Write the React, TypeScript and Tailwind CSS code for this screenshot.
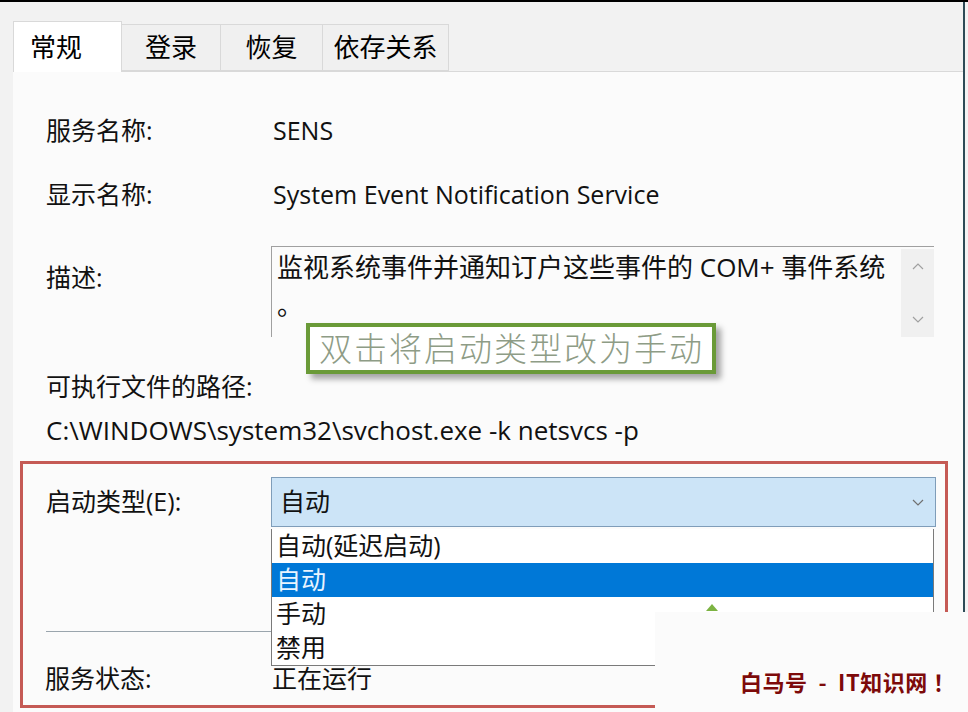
const ui = "font-['Open_Sans','Noto_Sans_CJK_SC',sans-serif]";

function Chevron({ up = false, className = "" }: { up?: boolean; className?: string }) {
  return (
    <svg width="12" height="7" viewBox="0 0 12 7" className={className}>
      <path
        d={up ? "M1 6 L6 1 L11 6" : "M1 1 L6 6 L11 1"}
        fill="none"
        stroke="currentColor"
        strokeWidth="1.2"
      />
    </svg>
  );
}

function Tab({ label, active, width }: { label: string; active?: boolean; width: string }) {
  return (
    <div
      className={`${width} flex items-center border border-[#d9d9d9] ${
        active
          ? "h-[51px] bg-white border-b-0 pl-[16px] -mb-px relative z-10"
          : "h-[47px] bg-[#f0f0f0] border-l-0 justify-center"
      }`}
    >
      <span className="text-[26px] text-black">{label}</span>
    </div>
  );
}

function Row({ label, children, className = "" }: { label: string; children?: React.ReactNode; className?: string }) {
  return (
    <div className={`flex items-center h-[40px] ${className}`}>
      <div className="w-[227px] shrink-0 text-[25px]">{label}</div>
      <div className="text-[25px] whitespace-nowrap">{children}</div>
    </div>
  );
}

export default function App() {
  const options = ["自动(延迟启动)", "自动", "手动", "禁用"];

  return (
    <div className={`${ui} relative w-[968px] h-[712px] overflow-hidden flex bg-[#f2f2f2] text-[#111] border-t-2 border-black`}>
      <div className="w-[963px] flex flex-col">
        {/* tabs */}
        <div className="h-[69px] shrink-0 flex items-end pl-[13px]">
          <Tab label="常规" active width="w-[109px]" />
          <Tab label="登录" width="w-[99px]" />
          <Tab label="恢复" width="w-[102px]" />
          <Tab label="依存关系" width="w-[126px]" />
        </div>

        {/* panel */}
        <div className="flex-1 ml-[13px] bg-[#fbfbfb] border-t border-[#d9d9d9] pl-[33px]">
          <Row label="服务名称:" className="mt-[39px]">SENS</Row>
          <Row label="显示名称:" className="mt-[24px]">System Event Notification Service</Row>

          <div className="flex mt-[31px] h-[91px]">
            <div className="w-[225px] shrink-0 text-[25px] pt-[11px] leading-[40px]">描述:</div>
            <div className="w-[663px] flex border-t border-l border-[#a0a0a0]">
              <div className="flex-1 pl-[5px] pt-[1px] text-[26px] leading-[38px] whitespace-nowrap">
                监视系统事件并通知订户这些事件的 COM+ 事件系统
                <br />。
              </div>
              <div className="w-[33px] mt-[2px] bg-[#f0f0f0] flex flex-col items-center justify-between py-[14px] text-[#a0a0a0]">
                <Chevron up />
                <Chevron />
              </div>
            </div>
          </div>

          <Row label="可执行文件的路径:" className="mt-[30px]" />
          <div className="h-[40px] mt-[3px] flex items-center text-[26px] whitespace-nowrap">
            C:\WINDOWS\system32\svchost.exe -k netsvcs -p
          </div>

          {/* startup section, outlined in red */}
          <div className="mt-[11px] -ml-[26px] w-[928px] h-[247px] border-[3px] border-[#c55a55] pl-[23px] pt-[13px]">
            <div className="flex items-center">
              <div className="w-[225px] shrink-0 text-[25px]">启动类型(E):</div>
              <div className="w-[665px] h-[50px] bg-[#cce4f7] border border-[#7f9db9] flex items-center justify-between pl-[8px] pr-[11px]">
                <span className="text-[25px]">自动</span>
                <Chevron className="text-[#707070]" />
              </div>
            </div>
            <div className="mt-[104px] w-[609px] h-px bg-[#9aa5ad]" />
            <Row label="服务状态:" className="mt-[27px] -ml-px">
              正在运行
            </Row>
          </div>
        </div>
      </div>
      <div className="w-[2px] bg-[#2e4b57]" />
      <div className="flex-1 bg-[#f4f4f4]" />

      {/* open drop-down list */}
      <div className="absolute left-[271px] top-[527px] w-[663px] bg-white border border-t-0 border-[#7a7a7a]">
        {options.map((o, i) => (
          <div
            key={o}
            className={`h-[34px] flex items-center pl-[4px] text-[25px] ${
              i === 1 ? "bg-[#0078d7] text-[#e8f4ff]" : "text-[#111]"
            }`}
          >
            {o}
          </div>
        ))}
      </div>

      {/* annotation callout */}
      <div className="absolute left-[306px] top-[321px] w-[410px] h-[51px] bg-white border-[4px] border-[#6a9a38] shadow-[5px_5px_6px_rgba(0,0,0,0.35)] flex items-center pl-[9px]">
        <span className="text-[33px] leading-none tracking-[2px] text-[#8e9c86] font-light whitespace-nowrap">
          双击将启动类型改为手动
        </span>
      </div>

      {/* watermark patch */}
      <div className="absolute left-[706px] top-[602px] w-0 h-0 border-l-[6px] border-r-[6px] border-b-[7px] border-l-transparent border-r-transparent border-b-[#7cb342]" />
      <div className="absolute left-[655px] top-[610px] right-0 bottom-0 bg-[#fbfbfb]">
        <div className="absolute left-[85px] top-[54px] text-[22px] leading-[30px] font-bold whitespace-pre tracking-[0.5px] text-[#7d0a0a] font-['Noto_Sans_CJK_SC',sans-serif]">
          白马号  -  IT知识网 ！
        </div>
      </div>
    </div>
  );
}
